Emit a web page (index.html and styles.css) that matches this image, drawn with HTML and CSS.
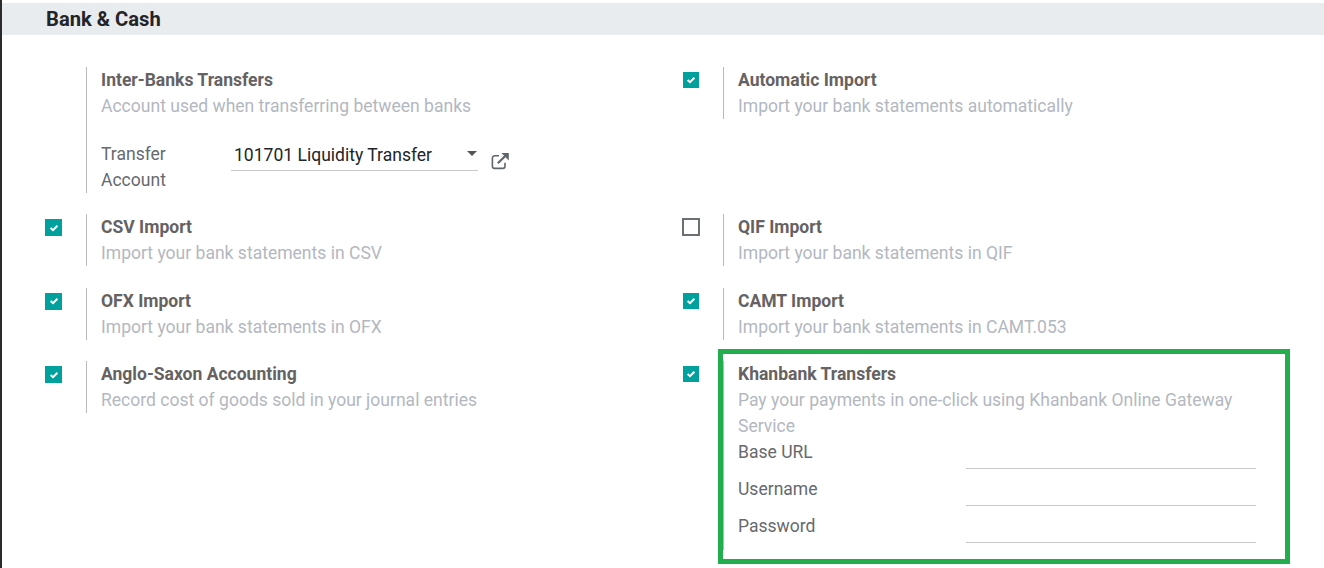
FILE: index.html
```html
<!DOCTYPE html>
<html lang="en">
<head>
    <meta charset="UTF-8">
    <title>Bank &amp; Cash Settings</title>
    <link rel="stylesheet" href="styles.css">
</head>
<body>
    <main class="page">
        <h2 class="section-title">Bank &amp; Cash</h2>

        <div class="settings-grid">
            <div class="setting">
                <div class="check-box"></div>
                <div class="setting-body">
                    <div class="setting-title">Inter-Banks Transfers</div>
                    <div class="setting-help">Account used when transferring between banks</div>
                    <div class="transfer-row">
                        <div class="transfer-label">Transfer Account</div>
                        <div class="select-field">
                            <span>101701 Liquidity Transfer</span>
                            <span class="caret"></span>
                        </div>
                        <svg class="open-icon" width="20" height="20" viewBox="0 0 20 20" fill="none" stroke="#5f666c" stroke-width="1.6">
                            <path d="M9 4.8H4.6A2.2 2.2 0 0 0 2.4 7v8.2a2.2 2.2 0 0 0 2.2 2.2h8.2a2.2 2.2 0 0 0 2.2-2.2v-3.4"/>
                            <path d="M7.8 12.2 15 5.2" stroke-width="2.2"/>
                            <path d="M11.4 2h7.4v7.4z" fill="#5f666c" stroke="none"/>
                        </svg>
                    </div>
                </div>
            </div>

            <div class="setting right">
                <div class="check-box">
                    <span class="check on"><svg width="10" height="10" viewBox="0 0 10 10"><path d="M1.6 5 4 7.2 8.4 2.8" fill="none" stroke="#fff" stroke-width="2"/></svg></span>
                </div>
                <div class="setting-body">
                    <div class="setting-title">Automatic Import</div>
                    <div class="setting-help">Import your bank statements automatically</div>
                </div>
            </div>

            <div class="setting">
                <div class="check-box">
                    <span class="check on"><svg width="10" height="10" viewBox="0 0 10 10"><path d="M1.6 5 4 7.2 8.4 2.8" fill="none" stroke="#fff" stroke-width="2"/></svg></span>
                </div>
                <div class="setting-body">
                    <div class="setting-title">CSV Import</div>
                    <div class="setting-help">Import your bank statements in CSV</div>
                </div>
            </div>

            <div class="setting right">
                <div class="check-box">
                    <span class="check off"></span>
                </div>
                <div class="setting-body">
                    <div class="setting-title">QIF Import</div>
                    <div class="setting-help">Import your bank statements in QIF</div>
                </div>
            </div>

            <div class="setting">
                <div class="check-box">
                    <span class="check on"><svg width="10" height="10" viewBox="0 0 10 10"><path d="M1.6 5 4 7.2 8.4 2.8" fill="none" stroke="#fff" stroke-width="2"/></svg></span>
                </div>
                <div class="setting-body">
                    <div class="setting-title">OFX Import</div>
                    <div class="setting-help">Import your bank statements in OFX</div>
                </div>
            </div>

            <div class="setting right">
                <div class="check-box">
                    <span class="check on"><svg width="10" height="10" viewBox="0 0 10 10"><path d="M1.6 5 4 7.2 8.4 2.8" fill="none" stroke="#fff" stroke-width="2"/></svg></span>
                </div>
                <div class="setting-body">
                    <div class="setting-title">CAMT Import</div>
                    <div class="setting-help">Import your bank statements in CAMT.053</div>
                </div>
            </div>

            <div class="setting">
                <div class="check-box">
                    <span class="check on"><svg width="10" height="10" viewBox="0 0 10 10"><path d="M1.6 5 4 7.2 8.4 2.8" fill="none" stroke="#fff" stroke-width="2"/></svg></span>
                </div>
                <div class="setting-body">
                    <div class="setting-title">Anglo-Saxon Accounting</div>
                    <div class="setting-help">Record cost of goods sold in your journal entries</div>
                </div>
            </div>

            <div class="setting right highlighted">
                <div class="check-box">
                    <span class="check on"><svg width="10" height="10" viewBox="0 0 10 10"><path d="M1.6 5 4 7.2 8.4 2.8" fill="none" stroke="#fff" stroke-width="2"/></svg></span>
                </div>
                <div class="setting-body">
                    <div class="setting-title">Khanbank Transfers</div>
                    <div class="setting-help">Pay your payments in one-click using Khanbank Online Gateway Service</div>
                    <div class="cred-row"><label class="cred-label">Base URL</label><div class="cred-input"></div></div>
                    <div class="cred-row"><label class="cred-label">Username</label><div class="cred-input"></div></div>
                    <div class="cred-row"><label class="cred-label">Password</label><div class="cred-input"></div></div>
                </div>
                <div class="green-frame"></div>
            </div>
        </div>
    </main>
</body>
</html>
```

FILE: styles.css
```css
html, body {
    margin: 0;
    height: 100%;
    overflow: hidden;
    background-color: #ffffff;
}

body {
    font-family: Roboto, "Liberation Sans", sans-serif;
    font-size: 17.55px;
    line-height: 26px;
    color: #4c4c4c;
}

.page {
    height: 568px;
    padding-top: 3px;
    box-sizing: border-box;
    border-left: 2px solid #2b2b2b;
}

.section-title {
    margin: 0;
    height: 32px;
    padding-left: 44px;
    background-color: #e9ecef;
    color: #212529;
    font-size: 20.2px;
    font-weight: 700;
    line-height: 33px;
}

.settings-grid {
    display: grid;
    grid-template-columns: 637px 1fr;
    align-items: start;
    row-gap: 21.6px;
    padding-top: 32px;
}

.setting {
    display: flex;
    position: relative;
}

.check-box {
    width: 84px;
    flex-shrink: 0;
    padding: 5.2px 0 0 43px;
    box-sizing: border-box;
}

.setting.right .check-box {
    padding-left: 44px;
}

.check {
    display: flex;
    align-items: center;
    justify-content: center;
    width: 17px;
    height: 17px;
    box-sizing: border-box;
}

.setting.right .check.on {
    width: 16px;
    height: 16px;
}

.check.on {
    background-color: #00a09d;
}

.check.off {
    width: 18px;
    height: 18px;
    margin-left: -1px;
    margin-top: -1px;
    border: 2px solid #6b7074;
}

.setting-body {
    flex: 1;
    min-width: 0;
    border-left: 1px solid #b9b9b9;
    padding-left: 14px;
    padding-right: 68px;
}

.setting-title {
    font-weight: 700;
    color: #666262;
}

.setting-help {
    color: #b3b8bf;
}

.transfer-row {
    display: flex;
    align-items: flex-start;
    margin-top: 21.5px;
}

.transfer-label {
    width: 130px;
    color: #666a6e;
}

.select-field {
    display: flex;
    align-items: center;
    justify-content: space-between;
    width: 247px;
    height: 30px;
    margin-top: 0.75px;
    padding-left: 3px;
    padding-bottom: 1px;
    box-sizing: border-box;
    border-bottom: 1px solid #c8c8c8;
    color: #212529;
}

.caret {
    width: 0;
    height: 0;
    border-left: 5.5px solid transparent;
    border-right: 5.5px solid transparent;
    border-top: 5.5px solid #555;
    margin-right: 1px;
    margin-bottom: 3px;
}

.open-icon {
    margin: 10.75px 0 0 12px;
}

.cred-row {
    display: flex;
    height: 37px;
}

.cred-label {
    width: 228px;
    color: #666a6e;
}

.cred-input {
    width: 290px;
    height: 29px;
    border-bottom: 1px solid #c8c8c8;
}

.green-frame {
    position: absolute;
    left: 79px;
    top: -12.3px;
    width: 572px;
    height: 215px;
    box-sizing: border-box;
    border: 5px solid #22ad4f;
}
```
